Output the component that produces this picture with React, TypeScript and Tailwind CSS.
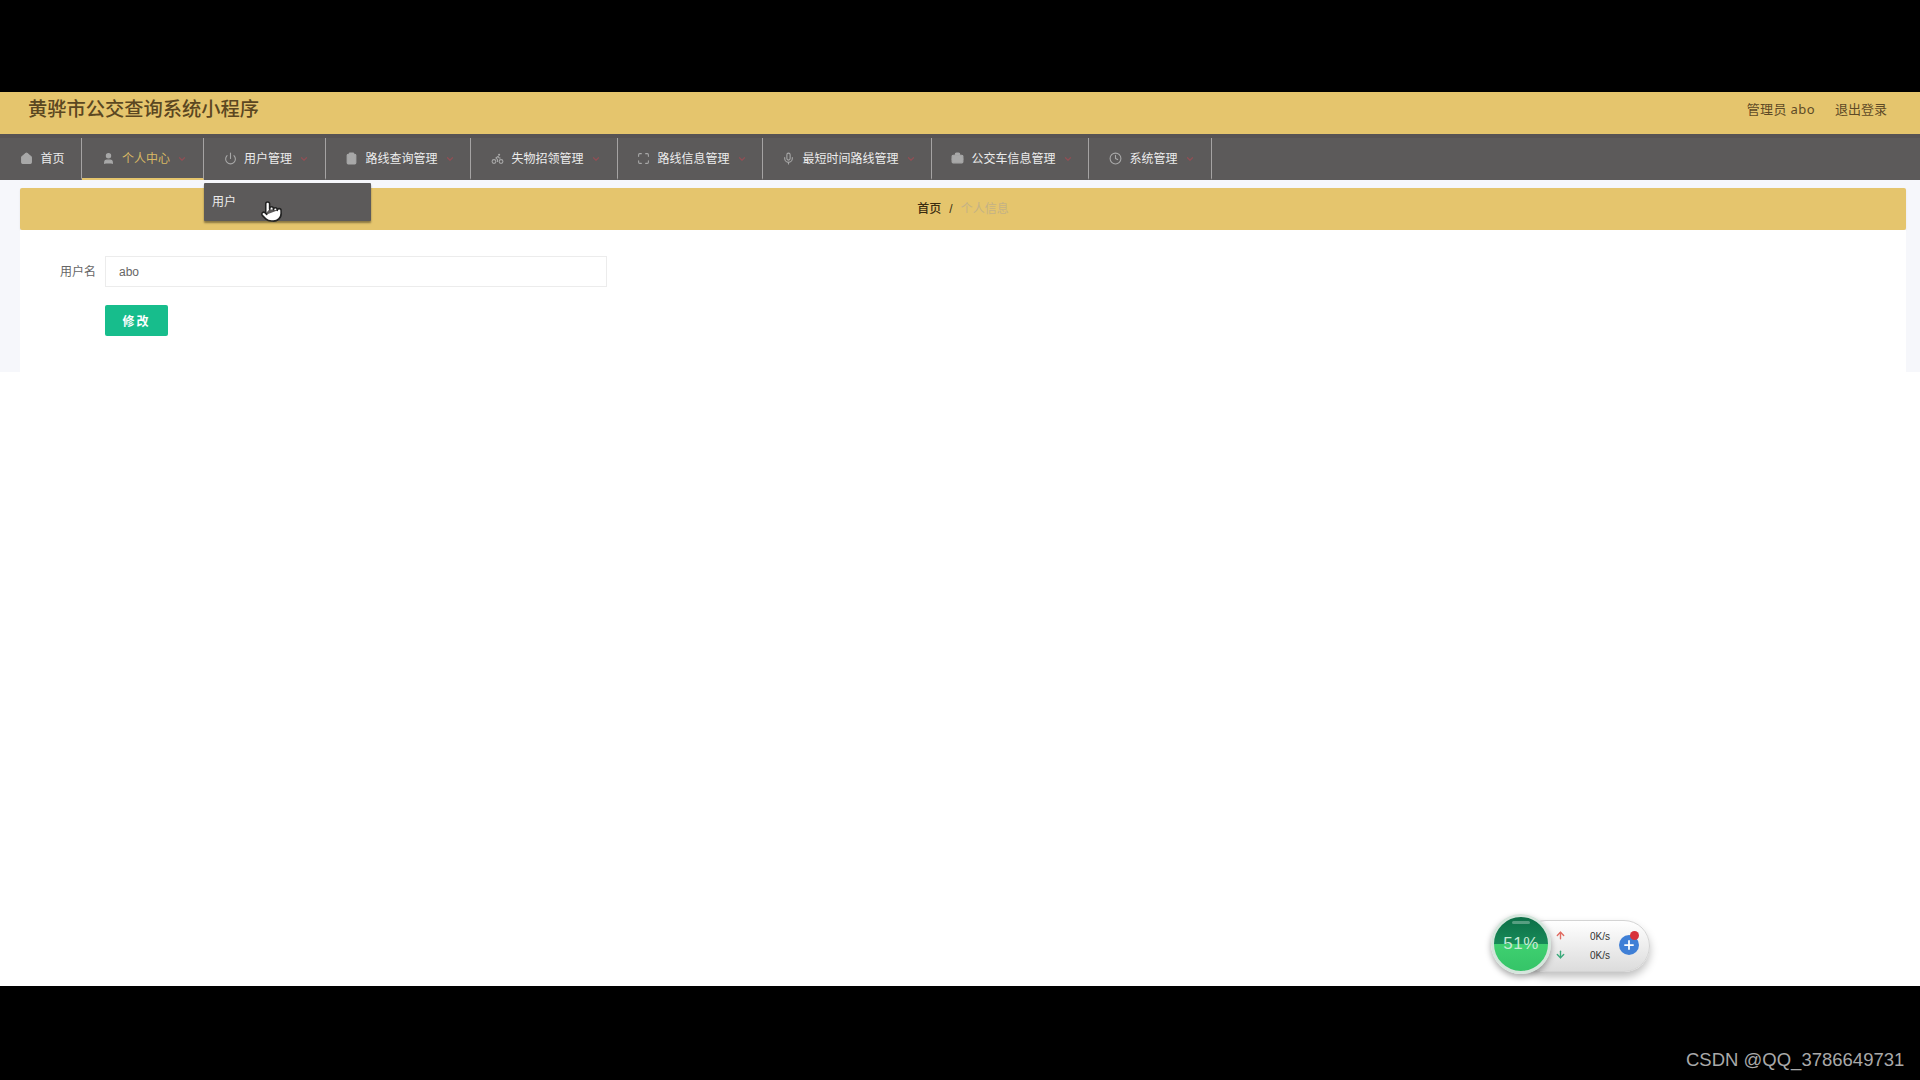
import {
  ArrowDown,
  ArrowUp,
  Bike,
  BriefcaseBusiness,
  ChevronDown,
  ClipboardList,
  Home,
  Maximize,
  Mic,
  Plus,
  Pointer,
  Power,
  User,
  Clock,
} from "lucide-react";

const tabs = [
  { label: "首页", icon: Home, width: "w-[82px]", arrow: false, filled: true },
  { label: "个人中心", icon: User, width: "w-[122px]", arrow: true, active: true, filled: true },
  { label: "用户管理", icon: Power, width: "w-[122px]", arrow: true },
  { label: "路线查询管理", icon: ClipboardList, width: "w-[145px]", arrow: true, filled: true },
  { label: "失物招领管理", icon: Bike, width: "w-[147px]", arrow: true },
  { label: "路线信息管理", icon: Maximize, width: "w-[145px]", arrow: true },
  { label: "最短时间路线管理", icon: Mic, width: "w-[169px]", arrow: true },
  { label: "公交车信息管理", icon: BriefcaseBusiness, width: "w-[157px]", arrow: true, filled: true },
  { label: "系统管理", icon: Clock, width: "w-[123px]", arrow: true },
];

const NavBar = () => {
  return (
    <nav className="flex h-[46px] bg-[#5c5a5a] border-t-4 border-[#575354]">
      {tabs.map((tab) => {
        const Icon = tab.icon;
        return (
          <div
            key={tab.label}
            className={`${tab.width} flex items-center justify-center gap-[7px] border-r border-b-2 border-r-[#a5a3a3] pl-[4px] pt-[1px] text-[12px] ${
              tab.active ? "border-b-[#e5c56d] text-[#d9b964]" : "border-b-transparent text-[#ececec]"
            }`}
          >
            <Icon size={13} className={`text-[#a8a8a8] ${tab.filled ? "fill-[#a8a8a8]" : ""}`} />
            <span>{tab.label}</span>
            {tab.arrow && <ChevronDown size={10} strokeWidth={3} className="text-[#8f4f55]" />}
          </div>
        );
      })}
    </nav>
  );
};

const NetWidget = () => {
  return (
    <div className="absolute left-[1489px] top-[912px] flex h-[62px] w-[163px] items-center">
      {/* pill */}
      <div className="absolute left-[31px] top-[8px] h-[52px] w-[130px] rounded-full border border-[#d4d4d4] bg-gradient-to-b from-white to-[#dcdcdc] shadow-[0_5px_8px_rgba(0,0,0,0.25)]">
        <div className="absolute left-[69px] top-[6px] text-[10px] leading-[19px] text-[#333]">
          <div>0K/s</div>
          <div>0K/s</div>
        </div>
        <div className="absolute left-[34px] top-[9px] flex flex-col gap-[8px]">
          <ArrowUp size={11} strokeWidth={3} className="text-[#e06a60]" />
          <ArrowDown size={11} strokeWidth={3} className="text-[#3aa97a]" />
        </div>
        <div className="absolute left-[98px] top-[14px] flex h-[20px] w-[20px] items-center justify-center rounded-full bg-[#3f7fd6]">
          <Plus size={14} strokeWidth={3} className="text-white" />
        </div>
        <div className="absolute left-[109px] top-[10px] h-[9px] w-[9px] rounded-full bg-[#d8313a]" />
      </div>
      {/* circle */}
      <div className="absolute left-[2px] top-[2px] flex h-[60px] w-[60px] items-center justify-center rounded-full border-[3px] border-[#d5e5dc] bg-[linear-gradient(180deg,#0d6f47_0%,#178a58_50%,#3fd070_50%,#35c468_100%)] shadow-[0_3px_6px_rgba(0,0,0,0.35)]">
        <div className="absolute left-[18px] top-[4px] h-[3px] w-[18px] rounded-full bg-white/30" />
        <span className="text-[17px] tracking-[0.5px] text-[#c8ead6]">51%</span>
      </div>
    </div>
  );
};

const App = () => {
  return (
    <div className="relative flex h-[1080px] w-[1920px] flex-col overflow-hidden bg-black font-['Liberation_Sans','Noto_Sans_CJK_SC',sans-serif]">
      <div className="h-[92px]" />

      {/* Header */}
      <header className="flex h-[42px] items-center justify-between bg-[#e5c56d] pb-[5px] pl-[28px] pr-[33px]">
        <h1 className="text-[19.25px] font-medium text-[#5b4721]">黄骅市公交查询系统小程序</h1>
        <div className="flex gap-5 pb-[2px] text-[13px] text-[#5e4a26]">
          <span className="font-['Noto_Sans','Noto_Sans_CJK_SC',sans-serif] tracking-[0.4px]">管理员 abo</span>
          <span>退出登录</span>
        </div>
      </header>

      <NavBar />

      {/* Content */}
      <main className="h-[806px] bg-white">
        <div className="h-[192px] bg-[#f6f7fb] px-5 pt-2 pr-[14px]">
          <div className="flex h-[42px] items-center justify-center gap-2 rounded-[2px] bg-[#e5c56d] text-[12px] shadow-[0_1px_2px_rgba(0,0,0,0.08)]">
            <span className="font-medium text-[#3a2c10]">首页</span>
            <span className="text-[#3a2c10]">/</span>
            <span className="text-[#c4b285]">个人信息</span>
          </div>
          <div className="h-[142px] bg-white pt-[26px] pl-[25px]">
            <div className="flex items-center gap-[9px]">
              <label className="w-[51px] text-right text-[12px] text-[#666]">用户名</label>
              <input
                readOnly
                value="abo"
                className="h-[31px] w-[502px] border border-[#ececec] bg-white px-[13px] text-[12px] text-[#666]"
              />
            </div>
            <button className="ml-[60px] mt-[18px] h-[31px] w-[63px] rounded-[2px] bg-[#17bd8c] pt-[2px] text-[12px] font-bold tracking-[2px] text-white">
              修改
            </button>
          </div>
        </div>
      </main>

      <div className="flex-1" />

      {/* Dropdown */}
      <div className="absolute left-[204px] top-[183px] flex h-[38px] w-[167px] items-center rounded-[1px] bg-[#5c5a5a] pl-[8px] text-[12px] text-[#ececec] shadow-[0_2px_2px_rgba(0,0,0,0.4)]">
        用户
      </div>
      <Pointer size={23} strokeWidth={1.6} className="absolute left-[260px] top-[200px] fill-white text-[#222]" />

      <NetWidget />

      <span className="absolute left-[1686px] top-[1046px] text-[18.5px] text-[#a9a9a9]">CSDN @QQ_3786649731</span>
    </div>
  );
};

export default App;
